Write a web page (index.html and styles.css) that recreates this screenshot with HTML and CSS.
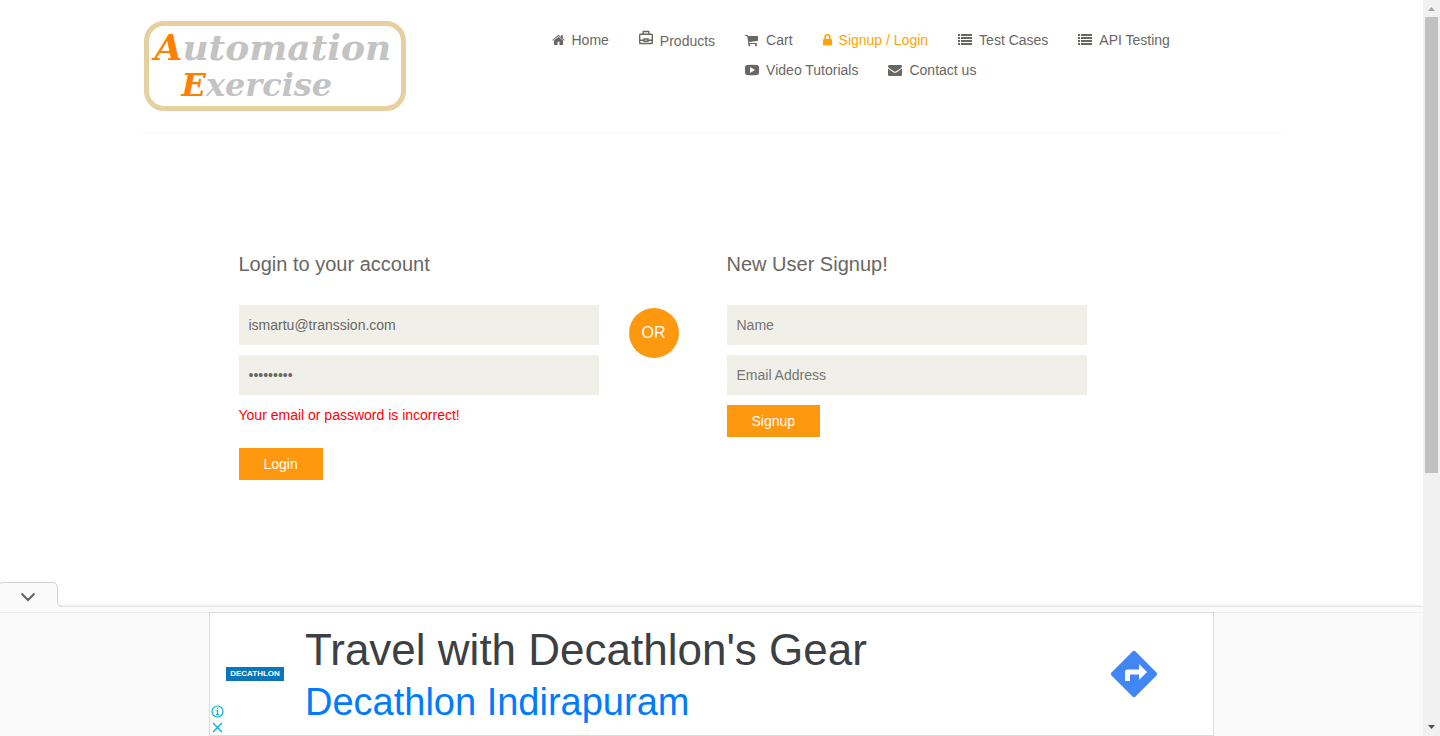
FILE: index.html
```html
<!DOCTYPE html>
<html lang="en">
<head>
<meta charset="utf-8">
<title>Automation Exercise - Signup / Login</title>
<link rel="stylesheet" href="styles.css">
</head>
<body>
<div class="page">
  <header class="header container">
    <a class="logo" href="#" aria-label="Automation Exercise">
      <span class="logo-first"><b>A</b>utomation</span>
      <span class="logo-second"><b>E</b>xercise</span>
    </a>
    <nav class="nav">
      <ul>
        <li><a href="#"><svg width="13" height="14" viewBox="0 0 13 14"><path d="M6.5 3.7 2 7.4V11.5q0 .5.5.5h3V8.8h2V12h3q.5 0 .5-.5V7.4z"/><path d="M.3 7 5.900 2.300q.6-.5 1.200 0L9 3.900V2.300h1.900v3.200L12.700 7l-.6.7L6.500 3 .9 7.700z"/></svg>Home</a></li>
        <li class="tall"><a href="#"><svg class="case" width="14" height="15" viewBox="0 0 14 15"><path class="line" d="M1.500 4.300h11q.8 0 .8.800v7.600q0 .8-.8.800h-11q-.8 0-.8-.8V5.100q0-.8.8-.8zM4.200 4V1.500h5.600V4M.7 10.300h4.300M9 10.300h4.300M5 9h4v2.300H5z"/></svg>Products</a></li>
        <li><a href="#"><svg width="14" height="14" viewBox="0 0 14 14"><path d="M.4 2h2.200q.5 0 .6.500L3.300 3H12.500q.5 0 .5.500v4q0 .4-.5.500L4.200 9l.2 1H11.500q.5 0 .5.500t-.5.500H3.600q-.6 0-.5-.6L3.300 9.600 2.100 3H.4Q0 3 0 2.500T.4 2z"/><circle cx="4.300" cy="12.200" r="1.100"/><circle cx="11" cy="12.200" r="1.100"/></svg>Cart</a></li>
        <li><a class="active" href="#"><svg width="9" height="14" viewBox="0 0 9 14"><path fill-rule="evenodd" d="M1.300 6V4.200a3.200 3.200 0 0 1 6.400 0V6h.5q.8 0 .8.800v4.900q0 .8-.8.800H.8q-.8 0-.8-.8V6.800Q0 6 .8 6zM2.900 6h3.200V4.200a1.600 1.600 0 0 0-3.200 0z"/></svg>Signup / Login</a></li>
        <li><a href="#"><svg width="14" height="14" viewBox="0 0 14 14"><path d="M0 1h2v2H0zM3 1h11v2H3zM0 4h2v2H0zM3 4h11v2H3zM0 7h2v2H0zM3 7h11v2H3zM0 10h2v2H0zM3 10h11v2H3z"/></svg>Test Cases</a></li>
        <li><a href="#"><svg width="14" height="14" viewBox="0 0 14 14"><path d="M0 1h2v2H0zM3 1h11v2H3zM0 4h2v2H0zM3 4h11v2H3zM0 7h2v2H0zM3 7h11v2H3zM0 10h2v2H0zM3 10h11v2H3z"/></svg>API Testing</a></li>
        <li><a href="#"><svg width="14" height="14" viewBox="0 0 14 14"><path fill-rule="evenodd" d="M2 2q5-.4 10 0 1.800.1 1.900 1.800.2 3 0 6.400-.1 1.700-1.900 1.800-5 .4-10 0Q.2 11.900.1 10.200q-.2-3.400 0-6.400Q.2 2.100 2 2zM5 4v6l5-3z"/></svg>Video Tutorials</a></li>
        <li><a href="#"><svg width="14" height="14" viewBox="0 0 14 14"><path d="M1.200 2h11.600q1.200 0 1.200 1.200 0 1.100-1.200 2L8.300 8.300q-1.300.9-2.600 0L1.200 5.200Q0 4.300 0 3.200 0 2 1.200 2z"/><path d="M0 5.600 5.200 9.200q1.800 1.200 3.600 0L14 5.600v6.200q0 1.200-1.200 1.200H1.200Q0 13 0 11.800z"/></svg>Contact us</a></li>
      </ul>
    </nav>
  </header>

  <main class="container forms">
    <form class="form">
      <h2>Login to your account</h2>
      <input type="email" aria-label="Email Address" value="ismartu@transsion.com">
      <input type="password" aria-label="Password" value="password1">
      <p class="error">Your email or password is incorrect!</p>
      <button type="button">Login</button>
    </form>
    <div class="divider"><span class="or">OR</span></div>
    <form class="form">
      <h2>New User Signup!</h2>
      <input type="text" aria-label="Name" placeholder="Name">
      <input type="email" aria-label="Email Address" placeholder="Email Address">
      <button type="button">Signup</button>
    </form>
  </main>
</div>

<aside class="anchor" aria-label="Advertisement">
  <button class="collapse" type="button" aria-label="Hide advertisement">
    <svg width="62" height="26" viewBox="0 0 62 26"><path class="tab" d="M0 26V2Q1 .5 3 .5H52Q57.500.5 57.500 6V19Q57.500 24.500 62 24.500V26z"/><path class="tab-edge" d="M0 2Q1 .5 3 .5H52Q57.500.5 57.500 6V19Q57.500 24.500 62 24.500"/><path class="chevron" d="M21.500 11.500 28 18l6.500-6.500"/></svg>
  </button>
  <div class="strip"></div>
  <div class="band">
    <div class="ad">
      <div class="ad-side">
        <span class="brand">DECATHLON</span>
        <div class="ad-marks">
          <svg width="13" height="13" viewBox="0 0 13 13"><circle cx="6.500" cy="6.500" r="5.500"/><path d="M5.500 5.500h1v4M5 9.500h3M6.500 3v1.200"/></svg>
          <svg width="13" height="13" viewBox="0 0 13 13"><path d="m2 2 9 9M11 2l-9 9"/></svg>
        </div>
      </div>
      <div class="ad-copy">
        <a class="ad-title" href="#">Travel with Decathlon's Gear</a>
        <a class="ad-sub" href="#">Decathlon Indirapuram</a>
      </div>
      <a class="directions" href="#" aria-label="Directions"><svg width="48" height="48" viewBox="0 0 48 48"><path fill="#4285f4" d="M22.500 1.500q1.500-1.300 3 0l21 21q1.300 1.500 0 3l-21 21q-1.500 1.300-3 0l-21-21q-1.300-1.500 0-3z"/><path fill="#fff" d="M15 31V22q0-2.500 2.500-2.500H29V14l8 8-8 8v-5.500h-9V31z"/></svg></a>
    </div>
  </div>
</aside>

<div class="scrollbar" aria-hidden="true">
  <svg width="17" height="17" viewBox="0 0 17 17"><path fill="#a3a3a3" d="M5 11h7L8.500 7z"/></svg>
  <div class="thumb"></div>
  <svg width="17" height="17" viewBox="0 0 17 17"><path fill="#505050" d="M5 6h7l-3.500 4z"/></svg>
</div>
</body>
</html>
```

FILE: styles.css
```css
* { box-sizing: border-box; }

body {
  margin: 0;
  background: #fff;
  color: #696763;
  font: 14px/20px "Liberation Sans", Arial, sans-serif;
}

a { color: inherit; text-decoration: none; }
svg { display: block; }

.page { padding-right: 17px; }

.container {
  max-width: 1140px;
  margin: 0 auto;
}

/* Header */
.header {
  display: flex;
  align-items: flex-start;
  padding: 21px 0;
  border-bottom: 1px solid #f5f5f5;
}

.logo {
  flex: none;
  display: flex;
  flex-direction: column;
  width: 262px;
  height: 90px;
  margin-left: 2px;
  padding-left: 6px;
  border: 5px solid #e7d09f;
  border-radius: 20px;
  color: #c3c3c3;
  font-family: "DejaVu Serif", serif;
  font-style: italic;
  font-weight: 700;
  white-space: nowrap;
}

.logo b { color: #ff8000; }
.logo-first { font-size: 36px; line-height: 42px; }
.logo-second { padding-left: 27px; font-size: 32px; line-height: 34px; }

.nav { flex: 1; margin-left: 131px; }

.nav ul {
  display: flow-root;
  margin: 0;
  padding: 9px 0 0;
  list-style: none;
}

.nav li {
  float: left;
  height: 30px;
  padding: 0 15px;
}

.nav .tall { height: 31px; }
.nav .tall a { align-items: flex-end; height: 21px; }
.nav .case { align-self: flex-start; }

.nav a {
  display: flex;
  align-items: center;
  gap: 7px;
}

.nav svg { fill: currentColor; }
.nav .line { fill: none; stroke: currentColor; stroke-width: 1.4; }
.nav .active { color: #ffa500; }

/* Forms */
.forms {
  display: grid;
  grid-template-columns: 360px 68px 360px;
  gap: 30px;
  padding: 119px 0 120px 97px;
}

.form {
  display: flex;
  flex-direction: column;
  align-items: flex-start;
  gap: 10px;
}

.form h2 {
  margin: 0 0 19px;
  font-size: 20px;
  font-weight: 400;
  line-height: 24px;
}

.form input {
  width: 100%;
  height: 40px;
  padding: 0 10px;
  border: 0;
  background: #f0f0e9;
  color: #696763;
  font: inherit;
}

.form input::placeholder { color: #757575; }
.form button {
  height: 32px;
  padding: 0 25px;
  border: 0;
  background: #fe980f;
  color: #fff;
  font: inherit;
}

.error { margin: 0 0 13px; color: #f00; }

.divider { padding-top: 56px; }

.or {
  display: block;
  width: 50px;
  border-radius: 50%;
  background: #fe980f;
  color: #fff;
  font-size: 16px;
  line-height: 50px;
  text-align: center;
}

/* Anchored advertisement */
.anchor {
  position: fixed;
  right: 17px;
  bottom: 0;
  left: 0;
}

.collapse {
  display: block;
  margin-bottom: -1px;
  padding: 0;
  border: 0;
  background: none;
  position: relative;
}

.tab { fill: #fafafa; }
.tab-edge { fill: none; stroke: #d0d0d0; }
.chevron { fill: none; stroke: #616161; stroke-width: 2; }

.strip {
  height: 5px;
  background: #fafafa;
  box-shadow: 0 -1px 3px #00000026;
}

.band {
  display: flex;
  justify-content: center;
  border-top: 1px solid #eee;
  background: #fafafa;
}

.ad {
  display: flex;
  width: 1005px;
  height: 124px;
  margin-top: -1px;
  border: 1px solid #dcdcdc;
  background: #fff;
}

.ad-side {
  display: flex;
  flex-direction: column;
  justify-content: space-between;
  width: 95px;
  padding-top: 54px;
}

.brand {
  width: 58px;
  margin-left: 16px;
  background: #0a75b8;
  color: #fff;
  font-size: 8px;
  font-weight: 700;
  line-height: 14px;
  text-align: center;
}

.ad-marks {
  display: flex;
  flex-direction: column;
  gap: 3px;
  padding: 0 0 1px 1px;
}

.ad-marks svg { fill: none; stroke: #00aecd; stroke-width: 1.2; }

.ad-copy {
  flex: 1;
  display: flex;
  flex-direction: column;
  padding-top: 10px;
}

.ad-title { color: #3c4043; font-size: 44px; line-height: 54px; }
.ad-sub { color: #007bff; font-size: 38px; line-height: 50px; }
.directions { align-self: center; padding-right: 55px; }

/* Page scroll bar */
.scrollbar {
  position: fixed;
  top: 0;
  right: 0;
  bottom: 0;
  display: flex;
  flex-direction: column;
  width: 17px;
  background: #f1f1f1;
}

.thumb {
  flex: 0 0 65%;
  max-height: 456px;
  margin: 0 2px auto;
  background: #c1c1c1;
}
```
